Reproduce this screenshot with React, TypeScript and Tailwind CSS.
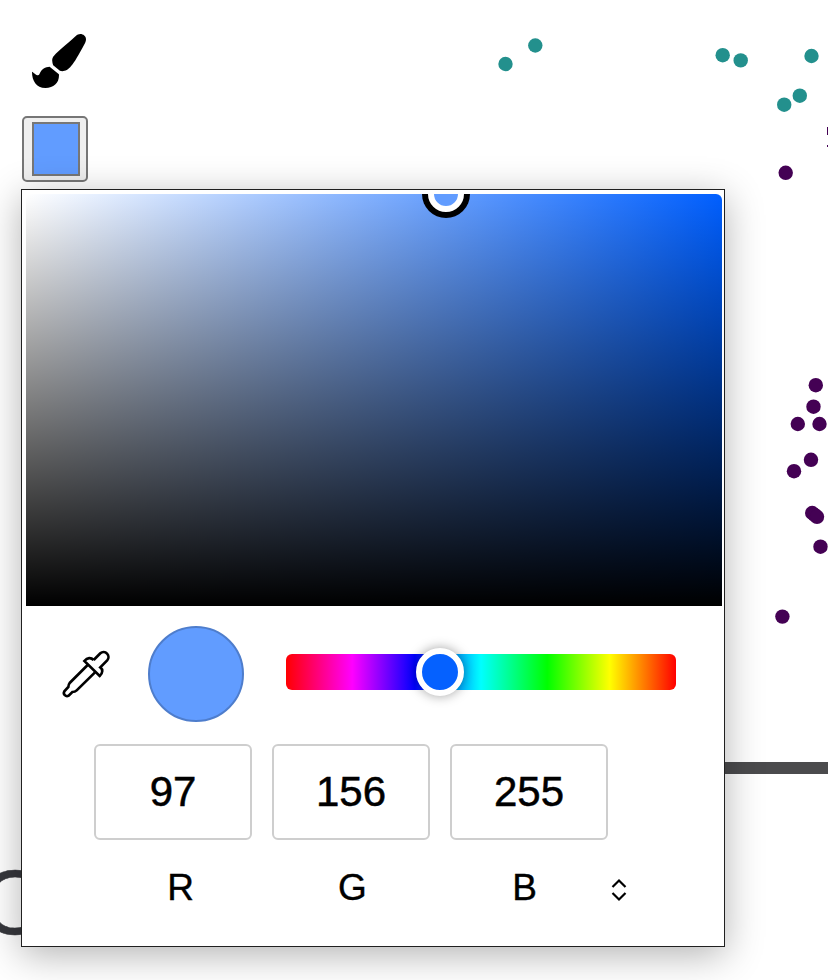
const TEAL = "#23908d";
const PURPLE = "#440154";

const points: { x: number; y: number; color: string }[] = [
  { x: 505.5, y: 64, color: TEAL },
  { x: 535.3, y: 45.5, color: TEAL },
  { x: 722.7, y: 55.2, color: TEAL },
  { x: 740.7, y: 60.4, color: TEAL },
  { x: 811.5, y: 56, color: TEAL },
  { x: 799.8, y: 95.7, color: TEAL },
  { x: 784.2, y: 104.7, color: TEAL },
  { x: 785.7, y: 172.8, color: PURPLE },
  { x: 815.8, y: 385.2, color: PURPLE },
  { x: 813.5, y: 406.7, color: PURPLE },
  { x: 797.8, y: 424, color: PURPLE },
  { x: 819.5, y: 424, color: PURPLE },
  { x: 811, y: 459.8, color: PURPLE },
  { x: 794, y: 471.2, color: PURPLE },
  { x: 812.2, y: 513, color: PURPLE },
  { x: 814.6, y: 514.9, color: PURPLE },
  { x: 817, y: 516.8, color: PURPLE },
  { x: 820.5, y: 546.7, color: PURPLE },
  { x: 782.4, y: 616.6, color: PURPLE },
];

function Plot() {
  return (
    <svg className="absolute inset-0 h-[980px] w-[828px]" viewBox="0 0 828 980">
      {points.map((p) => (
        <circle key={`${p.x}-${p.y}`} cx={p.x} cy={p.y} r="7.2" fill={p.color} />
      ))}
      <path d="M827 127h1v8h-1zM827 145h1v2h-1z" fill={PURPLE} />
      <rect x="700" y="762" width="128" height="12" fill="#4b4b4d" />
      <text x="-20" y="933.5" fontSize="90" fill="#36373c" stroke="#36373c" strokeWidth="0.5" fontFamily="Liberation Sans, Arial, sans-serif">
        O
      </text>
    </svg>
  );
}

function BrushIcon() {
  return (
    <svg className="h-[54px] w-[54px]" viewBox="0 0 512 512" fill="black">
      <path d="M167.02 309.34c-40.12 2.58-76.53 17.86-97.19 72.3-2.35 6.21-8 9.98-14.59 9.98-11.11 0-45.46-27.67-55.25-34.35C0 439.62 37.93 512 128 512c75.86 0 128-43.77 128-120.19 0-3.11-.65-6.08-.97-9.13l-88.01-73.34zM457.89 0c-15.16 0-29.37 6.71-40.21 16.45C213.27 199.05 192 203.34 192 257.09c0 13.7 3.25 26.76 8.73 38.7l63.82 53.18c7.21 1.8 14.64 3.03 22.39 3.03 62.11 0 98.11-45.47 211.16-256.46 7.38-14.35 13.9-29.85 13.9-45.99C512 20.64 486 0 457.89 0z" />
    </svg>
  );
}

function DropperIcon() {
  return (
    <svg className="h-[50px] w-[50px]" viewBox="63 117 150 150" fill="none" stroke="black" strokeWidth="8">
      <path d="M161 150L181 130A14.700 14.700 0 0 1 201.500 151L181 172C189 178 189 189 179 198L133 153C142 142 153 142 161 150" />
      <path d="M143 165L89 219Q85 224 85 231L73 244A9.500 9.500 0 0 0 86 257L97 246Q105 246 110 241L165 187" />
    </svg>
  );
}

const channels = [
  { label: "R", value: 97 },
  { label: "G", value: 156 },
  { label: "B", value: 255 },
];

export default function App() {
  return (
    <main className="relative h-[980px] w-[828px] overflow-hidden bg-white font-['Liberation_Sans',Arial,sans-serif] text-black">
      <Plot />
      <div className="relative flex flex-col items-start pl-[21px] pt-[34px]">
        <div className="ml-[11px]">
          <BrushIcon />
        </div>
        <button className="ml-px mt-7 flex h-[66px] w-[66px] rounded-[5px] border-2 border-[#767676] bg-[#efefef] px-2 py-1">
          <span className="h-[54px] w-12 shrink-0 border-2 border-[#777777] bg-[#619cff]" />
        </button>

        <section className="relative mt-[7px] flex h-[758px] w-[704px] flex-col border border-[#202020] bg-white pl-1 pt-1 shadow-[0_8px_36px_rgba(0,0,0,0.3)]">
          <div className="relative h-[412px] w-[696px] shrink-0 overflow-hidden rounded-t-md bg-[linear-gradient(to_top,#000,transparent),linear-gradient(to_right,#fff,#005fff)]">
            <span className="absolute left-[396px] top-[-24px] h-12 w-12 rounded-full bg-black p-1.5">
              <span className="block h-9 w-9 rounded-full border-6 border-white bg-[#619cff]" />
            </span>
          </div>

          <div className="mt-5 flex h-24 items-center">
            <div className="ml-[35px]">
              <DropperIcon />
            </div>
            <div className="ml-[37px] h-24 w-24 rounded-full border-2 border-[#4e7dcc] bg-[#619cff]" />
            <div className="relative ml-[42px] h-9 w-[390px] -translate-y-0.5 rounded-md bg-[linear-gradient(to_right,#f00_0%,#f0f_17%,#00f_33%,#0ff_50%,#0f0_67%,#ff0_83%,#f00_100%)]">
              <span className="absolute left-[130px] top-[-6px] h-12 w-12 rounded-full border-6 border-white bg-[#0561ff] shadow-[0_0_12px_rgba(0,0,0,0.37)]" />
            </div>
          </div>

          <div className="ml-[68px] mt-[22px] flex gap-5">
            {channels.map((c) => (
              <div
                key={c.label}
                className="flex h-24 w-[158px] items-center justify-center rounded-md border-2 border-[#cecece] text-[42px] leading-none [-webkit-text-stroke:0.5px_black]"
              >
                {c.value}
              </div>
            ))}
          </div>

          <div className="ml-[68px] mt-[26px] flex h-11 items-center">
            {channels.map((c) => (
              <span
                key={c.label}
                className="w-[172px] pl-px text-center text-[37px] leading-[44px] [-webkit-text-stroke:0.4px_black]"
              >
                {c.label}
              </span>
            ))}
            <svg className="mt-1 h-6 w-[18px]" viewBox="0 0 18 24" fill="none" stroke="black" strokeWidth="2.2">
              <path d="M2.500 9L9 2.500l6.500 6.500M2.500 15L9 21.500l6.500-6.500" />
            </svg>
          </div>
        </section>
      </div>
    </main>
  );
}
